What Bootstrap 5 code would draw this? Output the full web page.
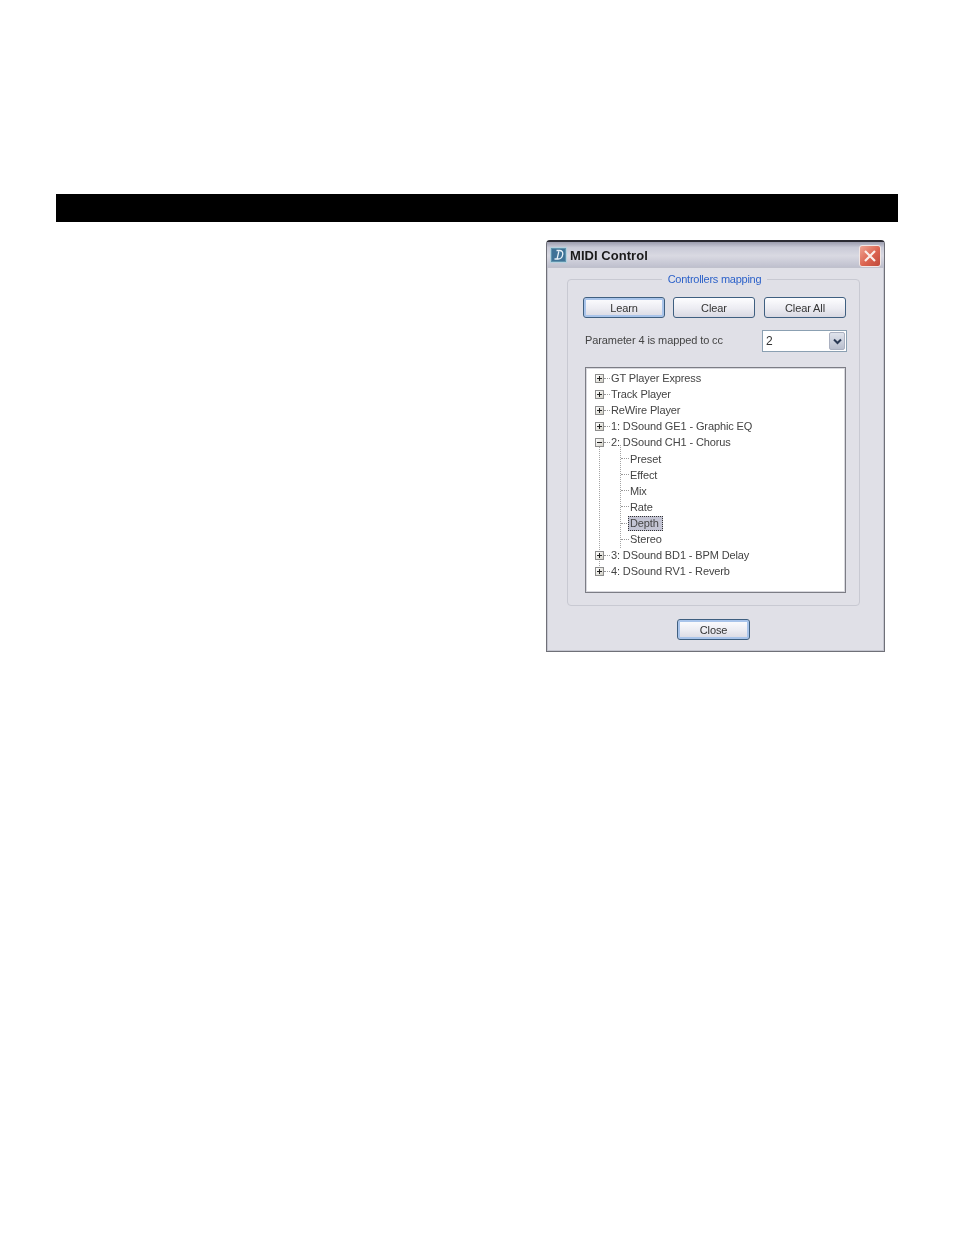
<!DOCTYPE html>
<html lang="en"><head><meta charset="utf-8"><title>MIDI Control</title>
<link rel="stylesheet" href="https://cdn.jsdelivr.net/npm/bootstrap@5.3.0/dist/css/bootstrap.min.css">
<style>
html,body{height:100%;}
body{background:#fff;font-family:"Liberation Sans",Arial,sans-serif;font-size:11px;color:#3c3c3c;}
.sheet{padding:194px 56px 0 56px;width:954px;}
.blackbar{height:28px;background:#000;}
.win-holder{margin-top:18px;padding-right:13px;}
.midi-win{width:339px;height:412px;background:#e0e0e7;border:1px solid #6f7078;border-top:2px solid #2a2a32;border-radius:4px 4px 0 0;box-shadow:inset 0 0 0 1px #c4c5cf;filter:blur(.4px);}
.win-title{height:26px;padding:0 2px 0 3px;background:linear-gradient(#9c9dae 0,#c9cad7 22%,#d9d9e2 55%,#bfc0ce 100%);border-bottom:1px solid #c0c1cc;}
.win-name{font-weight:700;font-size:13px;color:#1a1a1a;margin-left:3px;padding-top:2px;letter-spacing:.05px;}
.win-ico{width:17px;height:16px;}
.win-x{width:22px;height:22px;margin-top:3px;margin-right:1px;border:1px solid #f2e7e5;border-radius:3px;background:linear-gradient(135deg,#efa594,#dc6450 55%,#bf4a3c);}
.win-body{padding:11px 24px 0 20px;}
.group-box{height:327px;border:1px solid #c8c9d2;border-radius:4px;padding:0 13px 0 15px;}
.group-title{margin-top:-8px;height:15px;line-height:15px;}
.group-title span{background:#e0e0e7;padding:0 6px;color:#2d62c9;font-size:11px;letter-spacing:-.25px;}
.btn-row{margin-top:10px;gap:8px;}
.xp-btn{height:21px;padding:0;font-size:11px;line-height:18px;color:#333;border:1px solid #3f5f80;border-radius:3px;background:linear-gradient(#fdfdff,#ececf2 55%,#d8d8e2);letter-spacing:-.1px;}
.xp-btn:hover{color:#333;border-color:#3f5f80;}
.w82{width:82px;}
.xp-default{box-shadow:inset 0 0 0 2px #a9c4ea;}
.map-row{margin-top:12px;height:22px;}
.map-label{letter-spacing:-.1px;font-size:11px;color:#444;margin-left:2px;margin-top:-2px;}
.cc-combo{width:85px;height:22px;border:1px solid #8ba0b2;background:#fff;margin-right:-1px;}
.cc-val{padding-left:3px;color:#333;font-size:12px;}
.cc-arrow{width:16px;margin:1px;background:linear-gradient(#dfe3ec,#b9bfce);border:1px solid #aab0c0;border-radius:2px;}
.tree-box{margin:15px 0 0 2px;width:261px;height:226px;background:#fff;border:1px solid #7c7d85;box-shadow:inset 0 0 0 1px #d8d8de;padding:2px 0 0 9px;position:relative;}
.t-row{height:16.12px;line-height:16px;color:#444;white-space:nowrap;letter-spacing:-.12px;}
.t-box{width:9px;height:9px;border:1px solid #8d8d8d;background:linear-gradient(135deg,#fff,#d4d2c8);position:relative;flex:none;}
.t-box::before{content:"";position:absolute;left:1px;right:1px;top:3px;height:1px;background:#222;}
.t-plus::after{content:"";position:absolute;top:1px;bottom:1px;left:3px;width:1px;background:#222;}
.t-stub{width:6px;border-top:1px dotted #999;flex:none;margin-right:1px;}
.t-kids{position:relative;}
.t-kids::before{content:"";position:absolute;left:4px;top:-4px;height:121px;border-left:1px dotted #a5a5a5;}
.t-kids::after{content:"";position:absolute;left:25px;top:-6px;height:103px;border-left:1px dotted #a5a5a5;}
.t-kid{padding-left:26px;}
.t-kid .t-stub{width:8px;margin-right:1px;}
.t-sel{background:#c4c5d4;outline:1px dotted #333;outline-offset:-1px;padding:0 4px 0 2px;margin-left:-2px;height:15px;line-height:14px;}
.close-row{margin-top:13px;}
.w-close{width:73px;}
</style></head>
<body>
<div class="sheet">
  <div class="blackbar"></div>
  <div class="win-holder d-flex justify-content-end">
    <div class="midi-win">
      <div class="win-title d-flex align-items-center">
        <svg class="win-ico" viewBox="0 0 17 16"><rect x=".5" y=".5" width="16" height="15" fill="#5f93ad" stroke="#b4d0de"/><rect x="2" y="2" width="13" height="12" fill="#3f7397"/><path d="M6.500 3.500h3c2.500 0 3.500 1.800 3.200 4-.4 2.800-2.200 4.500-4.700 4.500H4.500M8.800 4.500L7.200 11.500" fill="none" stroke="#e8f2f8" stroke-width="1.300"/></svg>
        <span class="win-name flex-grow-1">MIDI Control</span>
        <div class="win-x d-flex align-items-center justify-content-center"><svg width="14" height="14" viewBox="0 0 14 14"><path d="M2 2l10 10M12 2L2 12" stroke="#fbeeea" stroke-width="2.200" fill="none"/></svg></div>
      </div>
      <div class="win-body">
        <div class="group-box">
          <div class="group-title text-center"><span>Controllers mapping</span></div>
          <div class="btn-row d-flex">
            <button type="button" class="btn xp-btn xp-default w82">Learn</button>
            <button type="button" class="btn xp-btn w82">Clear</button>
            <button type="button" class="btn xp-btn w82 ms-auto">Clear All</button>
          </div>
          <div class="map-row d-flex align-items-center justify-content-between">
            <span class="map-label">Parameter 4 is mapped to cc</span>
            <div class="cc-combo d-flex">
              <span class="cc-val flex-grow-1 align-self-center">2</span>
              <span class="cc-arrow d-flex align-items-center justify-content-center"><svg width="9" height="7" viewBox="0 0 9 7"><path d="M1 1.500l3.500 3.500L8 1.500" stroke="#2b3a55" stroke-width="2" fill="none"/></svg></span>
            </div>
          </div>
          <div class="tree-box">
            <div class="t-row d-flex align-items-center"><i class="t-box t-plus"></i><i class="t-stub"></i><span>GT Player Express</span></div>
            <div class="t-row d-flex align-items-center"><i class="t-box t-plus"></i><i class="t-stub"></i><span>Track Player</span></div>
            <div class="t-row d-flex align-items-center"><i class="t-box t-plus"></i><i class="t-stub"></i><span>ReWire Player</span></div>
            <div class="t-row d-flex align-items-center"><i class="t-box t-plus"></i><i class="t-stub"></i><span>1: DSound GE1 - Graphic EQ</span></div>
            <div class="t-row d-flex align-items-center"><i class="t-box"></i><i class="t-stub"></i><span>2: DSound CH1 - Chorus</span></div>
            <div class="t-kids">
              <div class="t-row t-kid d-flex align-items-center"><i class="t-stub"></i><span>Preset</span></div>
              <div class="t-row t-kid d-flex align-items-center"><i class="t-stub"></i><span>Effect</span></div>
              <div class="t-row t-kid d-flex align-items-center"><i class="t-stub"></i><span>Mix</span></div>
              <div class="t-row t-kid d-flex align-items-center"><i class="t-stub"></i><span>Rate</span></div>
              <div class="t-row t-kid d-flex align-items-center"><i class="t-stub"></i><span class="t-sel">Depth</span></div>
              <div class="t-row t-kid d-flex align-items-center"><i class="t-stub"></i><span>Stereo</span></div>
            </div>
            <div class="t-row d-flex align-items-center"><i class="t-box t-plus"></i><i class="t-stub"></i><span>3: DSound BD1 - BPM Delay</span></div>
            <div class="t-row d-flex align-items-center"><i class="t-box t-plus"></i><i class="t-stub"></i><span>4: DSound RV1 - Reverb</span></div>
          </div>
        </div>
        <div class="close-row d-flex justify-content-center">
          <button type="button" class="btn xp-btn xp-default w-close">Close</button>
        </div>
      </div>
    </div>
  </div>
</div>
<script src="https://cdn.jsdelivr.net/npm/bootstrap@5.3.0/dist/js/bootstrap.bundle.min.js"></script>
</body></html>
